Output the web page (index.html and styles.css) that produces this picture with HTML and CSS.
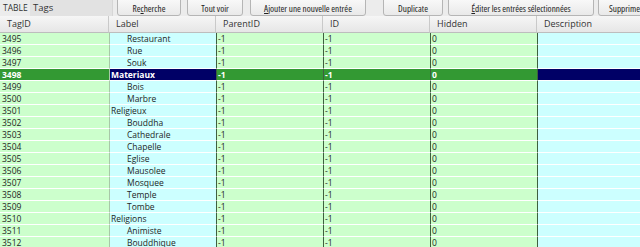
FILE: index.html
```html
<!DOCTYPE html>
<html>
<head>
<meta charset="utf-8">
<link rel="stylesheet" href="styles.css">
</head>
<body>
<div class="toolbar">
  <span class="tlabel">TABLE</span>
  <div class="tfield">Tags</div>
  <button class="btn b1">Re<u>c</u>herche</button>
  <button class="btn b2">Tout voir</button>
  <button class="btn b3"><u>A</u>jouter une nouvelle entrée</button>
  <button class="btn b4">Duplicate</button>
  <button class="btn b5"><u>É</u>diter les entrées sélectionnées</button>
  <button class="btn b6">Supprimer</button>
</div>
<div class="grid">
  <div class="hd">TagID</div><div class="hd">Label</div><div class="hd">ParentID</div><div class="hd">ID</div><div class="hd">Hidden</div><div class="hd last">Description</div>

  <div class="c g c0">3495</div><div class="c b lbl ch">Restaurant</div><div class="c g dl">-1</div><div class="c g dl">-1</div><div class="c g dl">0</div><div class="c b dl"></div>
  <div class="c g c0">3496</div><div class="c b lbl ch">Rue</div><div class="c g dl">-1</div><div class="c g dl">-1</div><div class="c g dl">0</div><div class="c b dl"></div>
  <div class="c g c0">3497</div><div class="c b lbl ch">Souk</div><div class="c g dl">-1</div><div class="c g dl">-1</div><div class="c g dl">0</div><div class="c b dl"></div>
  <div class="c g c0 sg">3498</div><div class="c b lbl sb">Materiaux</div><div class="c g dl sg">-1</div><div class="c g dl sg">-1</div><div class="c g dl sg">0</div><div class="c b dl sb"></div>
  <div class="c g c0">3499</div><div class="c b lbl ch">Bois</div><div class="c g dl">-1</div><div class="c g dl">-1</div><div class="c g dl">0</div><div class="c b dl"></div>
  <div class="c g c0">3500</div><div class="c b lbl ch">Marbre</div><div class="c g dl">-1</div><div class="c g dl">-1</div><div class="c g dl">0</div><div class="c b dl"></div>
  <div class="c g c0">3501</div><div class="c b lbl">Religieux</div><div class="c g dl">-1</div><div class="c g dl">-1</div><div class="c g dl">0</div><div class="c b dl"></div>
  <div class="c g c0">3502</div><div class="c b lbl ch">Bouddha</div><div class="c g dl">-1</div><div class="c g dl">-1</div><div class="c g dl">0</div><div class="c b dl"></div>
  <div class="c g c0">3503</div><div class="c b lbl ch">Cathedrale</div><div class="c g dl">-1</div><div class="c g dl">-1</div><div class="c g dl">0</div><div class="c b dl"></div>
  <div class="c g c0">3504</div><div class="c b lbl ch">Chapelle</div><div class="c g dl">-1</div><div class="c g dl">-1</div><div class="c g dl">0</div><div class="c b dl"></div>
  <div class="c g c0">3505</div><div class="c b lbl ch">Eglise</div><div class="c g dl">-1</div><div class="c g dl">-1</div><div class="c g dl">0</div><div class="c b dl"></div>
  <div class="c g c0">3506</div><div class="c b lbl ch">Mausolee</div><div class="c g dl">-1</div><div class="c g dl">-1</div><div class="c g dl">0</div><div class="c b dl"></div>
  <div class="c g c0">3507</div><div class="c b lbl ch">Mosquee</div><div class="c g dl">-1</div><div class="c g dl">-1</div><div class="c g dl">0</div><div class="c b dl"></div>
  <div class="c g c0">3508</div><div class="c b lbl ch">Temple</div><div class="c g dl">-1</div><div class="c g dl">-1</div><div class="c g dl">0</div><div class="c b dl"></div>
  <div class="c g c0">3509</div><div class="c b lbl ch">Tombe</div><div class="c g dl">-1</div><div class="c g dl">-1</div><div class="c g dl">0</div><div class="c b dl"></div>
  <div class="c g c0">3510</div><div class="c b lbl">Religions</div><div class="c g dl">-1</div><div class="c g dl">-1</div><div class="c g dl">0</div><div class="c b dl"></div>
  <div class="c g c0">3511</div><div class="c b lbl ch">Animiste</div><div class="c g dl">-1</div><div class="c g dl">-1</div><div class="c g dl">0</div><div class="c b dl"></div>
  <div class="c g c0">3512</div><div class="c b lbl ch">Bouddhique</div><div class="c g dl">-1</div><div class="c g dl">-1</div><div class="c g dl">0</div><div class="c b dl"></div>
</div>
</body>
</html>
```

FILE: styles.css
```css
html, body {
  margin: 0;
  padding: 0;
  background: #ffffff;
  overflow: hidden;
  width: 640px;
  height: 247px;
  font-family: "Open Sans", "Noto Sans", sans-serif;
  font-size: 8.5px;
  color: #222;
}
.toolbar {
  height: 16px;
  background: #ececec;
  display: flex;
  align-items: flex-end;
  overflow: hidden;
  white-space: nowrap;
}
.tlabel {
  flex: none;
  width: 30px;
  height: 16px;
  line-height: 16px;
  padding-left: 3px;
  box-sizing: border-box;
  font-size: 8.5px;
  color: #333;
}
.tfield {
  flex: none;
  width: 83px;
  height: 16px;
  line-height: 16px;
  padding-left: 3px;
  box-sizing: border-box;
  background: #e2e2e2;
  border-right: 1px solid #d6d6d6;
  font-size: 9.5px;
  color: #333;
}
.btn {
  flex: none;
  height: 19px;
  margin: 0;
  padding: 3px 0 0 0;
  box-sizing: border-box;
  border: 1px solid #b5b5b5;
  border-radius: 3px;
  background: linear-gradient(#fafafa, #e9e9e9);
  font-family: "Open Sans", "Noto Sans", sans-serif;
  font-stretch: 78%;
  font-size: 9.2px;
  color: #222;
  text-align: center;
  white-space: nowrap;
  overflow: hidden;
}
.b1 { width: 64px; margin-left: 4px; }
.b2 { width: 56px; margin-left: 6px; }
.b3 { width: 116px; margin-left: 7px; }
.b4 { width: 60px; margin-left: 17px; }
.b5 { width: 146px; margin-left: 5px; }
.b6 { width: 80px; margin-left: 4px; text-align: left; padding-left: 10px; }

.grid {
  display: grid;
  grid-template-columns: 109px 107px 107px 107px 107px 103px;
  grid-auto-rows: 12px;
  grid-template-rows: 17px;
}
.hd {
  height: 17px;
  box-sizing: border-box;
  background: linear-gradient(#f6f6f6, #e6e6e6);
  border-right: 1px solid #c9c9c9;
  border-bottom: 1px solid #bdbdbd;
  padding-left: 7px;
  line-height: 16px;
  font-size: 9px;
  color: #333;
}
.hd.last { border-right: none; }
.c {
  height: 12px;
  box-sizing: border-box;
  border-bottom: 1px solid #ffffff;
  line-height: 11px;
  padding-left: 2px;
  white-space: nowrap;
  overflow: hidden;
  color: #1e261e;
}
.g { background: #ccffcc; }
.b { background: #ccffff; }
.dl { border-left: 1px solid #3f5f3f; padding-left: 1px; }
.lbl { border-left: 1px solid #a8c8a8; padding-left: 1px; }
.ch { padding-left: 17px; }
.sg { background: #339933; color: #ffffff; font-weight: bold; }
.sb { background: #000066; color: #ffffff; font-weight: bold; }
```
